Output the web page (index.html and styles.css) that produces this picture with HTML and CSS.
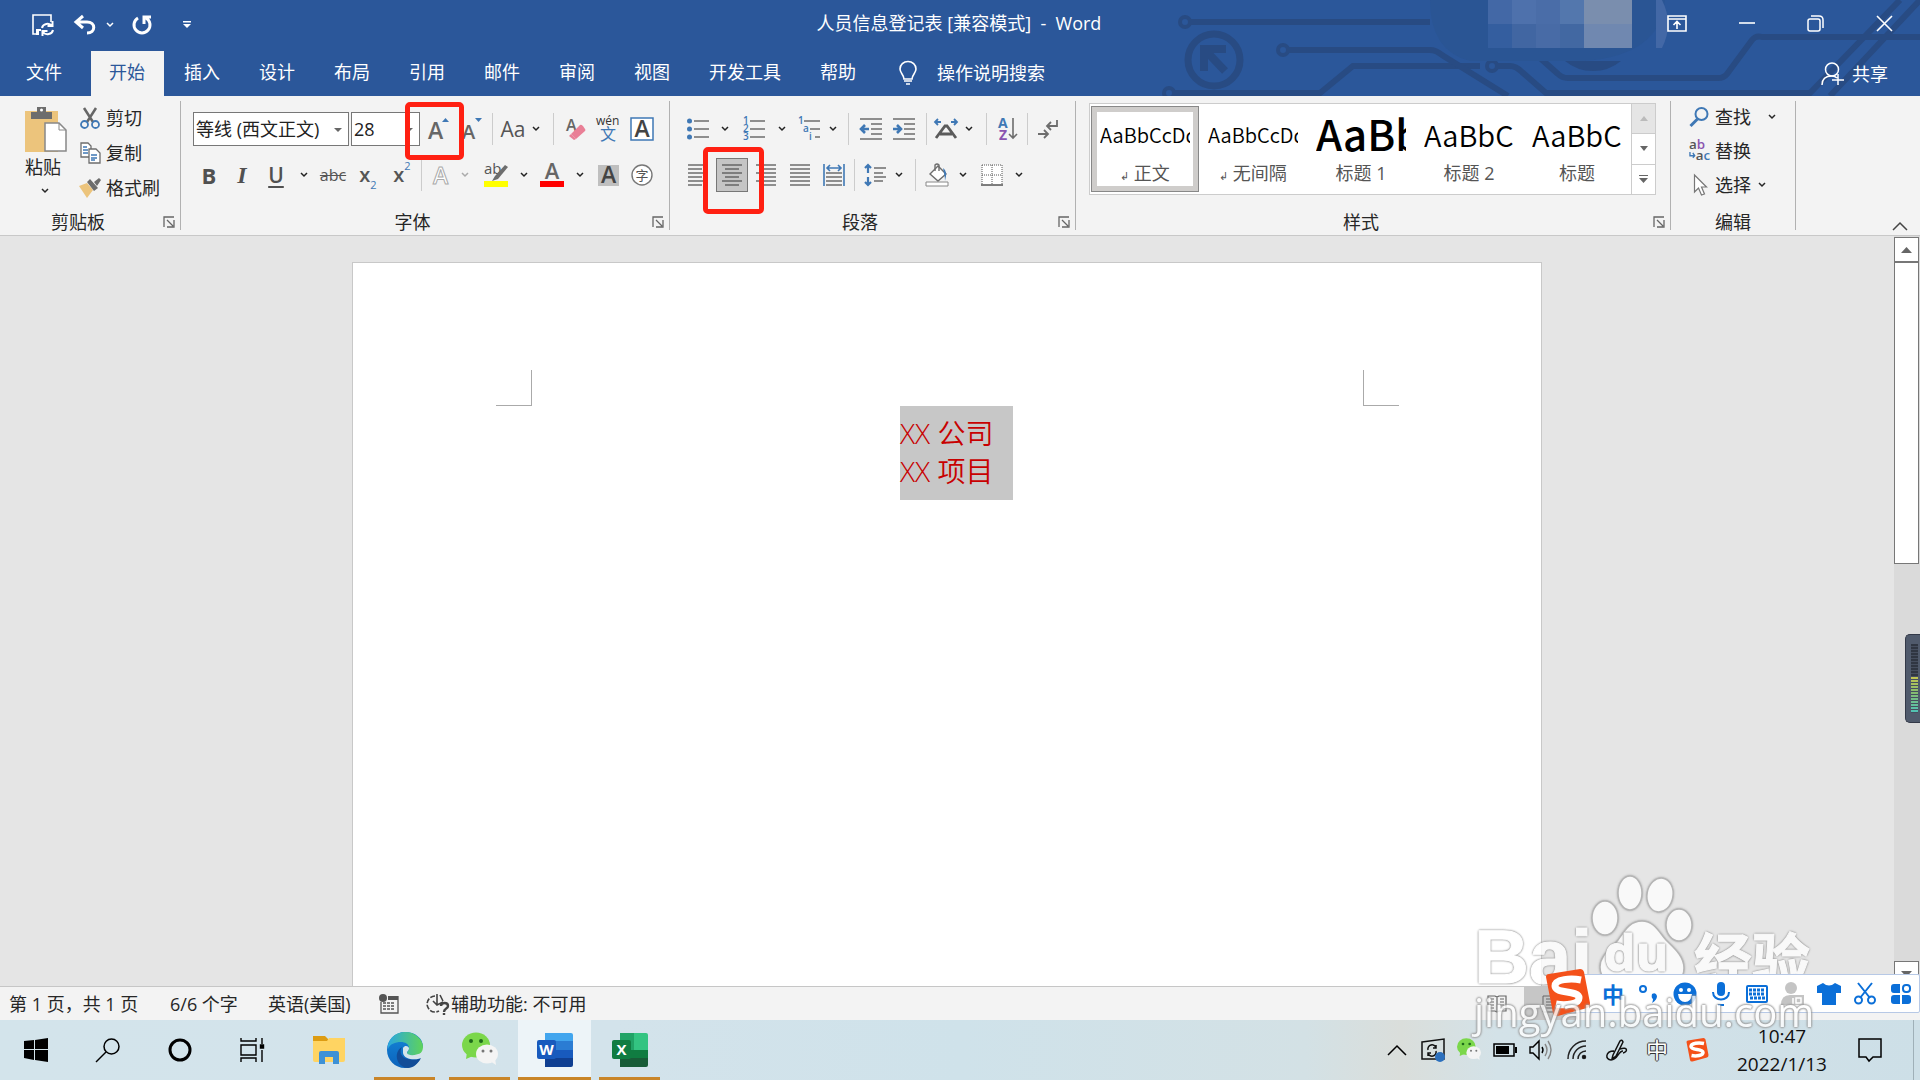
FILE: index.html
```html
<!DOCTYPE html>
<html lang="zh-CN">
<head>
<meta charset="utf-8">
<title>人员信息登记表 [兼容模式] - Word</title>
<link rel="stylesheet" href="styles.css">
</head>
<body>
<svg class="defs" aria-hidden="true">
  <symbol id="chev" viewBox="0 0 8 6"><path d="M1 1l3 3 3-3" fill="none" stroke="currentColor" stroke-width="1.5"/></symbol>
  <symbol id="launch" viewBox="0 0 12 12"><path d="M1 11V1h10M4 4l6 6M11 4v7H4" fill="none" stroke="#666" stroke-width="1.3"/></symbol>
  <symbol id="wechat" viewBox="0 0 36 36"><ellipse cx="14" cy="13" rx="14" ry="12.5" fill="#7bd74b"/><path d="M5 20l-1 7 7-3z" fill="#7bd74b"/><circle cx="9" cy="9" r="2" fill="#1f6b1b"/><circle cx="19" cy="9" r="2" fill="#1f6b1b"/><ellipse cx="25" cy="22" rx="11" ry="9.500" fill="#f4f4f4"/><path d="M28 29l6 4-1-7z" fill="#f4f4f4"/><circle cx="21" cy="19" r="1.500" fill="#777"/><circle cx="29" cy="19" r="1.500" fill="#777"/></symbol>
  <symbol id="sogou" viewBox="0 0 48 48"><path d="M3 8q0-3 3-3l31-5q3 0 4 3l6 31q0 4-3 5l-29 8q-4 1-5-3z" fill="#f4511a"/><path d="M38 11c-10-2-26-1-26 6 0 8 24 4 24 12 0 6-13 8-23 6" fill="none" stroke="#fff" stroke-width="7"/></symbol>
</svg>

<header class="top">
  <svg class="circuit" viewBox="0 0 760 96" aria-hidden="true">
    <g fill="none" stroke="#284b83" stroke-width="6">
      <circle cx="25" cy="22" r="5" stroke-width="4"/><path d="M31 22H270"/>
      <ellipse cx="54" cy="60" rx="26" ry="26" stroke-width="7"/>
      <path d="M44 71V49H66M46 51l19 20" stroke-width="8"/>
      <circle cx="9" cy="93" r="5" stroke-width="4"/><path d="M15 93H160l33-27H320"/>
      <circle cx="123" cy="50" r="5" stroke-width="4"/><path d="M129 50H270q6 0 12 5l66 41"/>
      <circle cx="332" cy="66" r="5" stroke-width="4"/><path d="M338 66h12q6 0 12 6l24 21H650L740 0M380 58l18 16q4 4 10 4H558q6 0 9-4l25-34q4-5 10-3H760M670 96L760 0"/>
    </g>
    <path d="M405 61q12 10 28 10t28-10z" fill="#284b83"/>
    <path d="M270 0H505q-4 55-80 61H310q-40-10-40-61z" fill="#2a5594"/>
    <g><path d="M328 0h24v24h-24z" fill="#4368a6"/><path d="M352 0h24v24h-24z" fill="#4e71ac"/><path d="M376 0h24v24h-24z" fill="#4a6da8"/><path d="M400 0h24v24h-24z" fill="#5377ad"/><path d="M424 0h48v24h-48z" fill="#7a8eae"/><path d="M328 24h24v24h-24z" fill="#345e9f"/><path d="M352 24h24v24h-24z" fill="#4166a2"/><path d="M376 24h24v24h-24z" fill="#486ba6"/><path d="M400 24h24v24h-24z" fill="#4268a2"/><path d="M424 24h48v24h-48z" fill="#7088b0"/><path d="M496 0h6q12 24 0 48h-6z" fill="#4368a6"/></g>
  </svg>
  <div class="titlebar">
    <div class="qat">
      <button aria-label="保存"><svg width="22" height="22" viewBox="0 0 22 22" fill="none" stroke="#fff" stroke-width="1.600"><path d="M6 20H1V1h18v7"/><path d="M4 15h5v2H7v4H4z" fill="#fff" stroke="none"/><path d="M10 14a5.500 5 0 0 1 10-2M20.500 7v5h-5M21 16a5.500 5 0 0 1-10 2M10.500 22v-5h5" stroke-width="2"/></svg></button>
      <button aria-label="撤消"><svg width="22" height="20" viewBox="0 0 22 20" fill="none" stroke="#fff" stroke-width="3"><path d="M9 1L2 7l7 6M2 7h11c9 0 9 11 0 11"/></svg></button>
      <button class="mini" aria-label="撤消选项"><svg width="8" height="6"><use href="#chev"/></svg></button>
      <button aria-label="恢复"><svg width="20" height="20" viewBox="0 0 20 20" fill="none" stroke="#fff" stroke-width="3"><path d="M6 3a8 8 0 1 0 8 0M12 9V2h7"/></svg></button>
      <button aria-label="自定义快速访问工具栏"><svg width="8" height="8" viewBox="0 0 8 8" fill="#fff"><path d="M0 0h8v1.500H0zM0 3h8L4 7z"/></svg></button>
    </div>
    <h1 class="doc-title">人员信息登记表 [兼容模式]&nbsp; -&nbsp; Word</h1>
    <div class="winbtns">
      <button aria-label="功能区显示选项"><svg width="20" height="17" viewBox="0 0 20 17" fill="none" stroke="#fff" stroke-width="1.600"><path d="M1 1h18v15H1zM1 4h18M10 14V7M6.500 10L10 6.500l3.500 3.500"/></svg></button>
      <button aria-label="最小化"><svg width="16" height="17" viewBox="0 0 16 17"><path d="M0 8h16" stroke="#fff" stroke-width="1.600"/></svg></button>
      <button aria-label="还原"><svg width="17" height="17" viewBox="0 0 17 17" fill="none" stroke="#fff" stroke-width="1.500"><rect x="1" y="4" width="12" height="12" rx="2"/><path d="M4 1h8q4 0 4 4v8"/></svg></button>
      <button aria-label="关闭"><svg width="17" height="17" viewBox="0 0 17 17"><path d="M1 1l15 15M16 1L1 16" stroke="#fff" stroke-width="1.600"/></svg></button>
    </div>
  </div>
  <nav class="tabs">
    <a href="#" class="tab file">文件</a><a href="#" class="tab active">开始</a><a href="#" class="tab">插入</a><a href="#" class="tab">设计</a><a href="#" class="tab">布局</a><a href="#" class="tab">引用</a><a href="#" class="tab">邮件</a><a href="#" class="tab">审阅</a><a href="#" class="tab">视图</a><a href="#" class="tab">开发工具</a><a href="#" class="tab">帮助</a>
    <button class="tellme"><svg width="18" height="24" viewBox="0 0 18 24" fill="none" stroke="#fff" stroke-width="1.600"><path d="M5 18c0-4-4-6-4-10a8 7.500 0 0 1 16 0c0 4-4 6-4 10zM5 20h8M7 23h4"/></svg>操作说明搜索</button>
    <button class="share"><svg width="24" height="24" viewBox="0 0 24 24" fill="none" stroke="#fff" stroke-width="1.500"><ellipse cx="11" cy="7.500" rx="6.500" ry="6.500"/><path d="M1 23c0-7 5-9 10-9 2 0 4 1 5 2M17 12v11M11 18h12"/></svg>共享</button>
  </nav>
</header>

<section class="ribbon" aria-label="开始">
  <div class="group clip">
    <div class="tools">
      <button class="paste"><svg width="42" height="46" viewBox="0 0 42 46"><path d="M0 5h33v41H0z" fill="#ecc47c"/><path d="M6 13V6h6V1h9v5h6v7z" fill="#6d6d6d"/><circle cx="16.500" cy="4" r="1.500" fill="#fff"/><path d="M20 17h14l7 7v21H20z" fill="#fff" stroke="#888" stroke-width="1.500"/><path d="M34 17v7h7" fill="none" stroke="#888"/></svg><span>粘贴</span><svg class="more" width="8" height="6"><use href="#chev"/></svg></button>
      <div class="stack wide">
        <button><svg width="20" height="22" viewBox="0 0 20 22" fill="none"><path d="M4 1l9 14M16 1L7 15" stroke="#666" stroke-width="2.500"/><ellipse cx="4.500" cy="17.500" rx="3.500" ry="3.500" stroke="#3f78b5" stroke-width="1.800"/><ellipse cx="15.500" cy="17.500" rx="3.500" ry="3.500" stroke="#3f78b5" stroke-width="1.800"/></svg>剪切</button>
        <button><svg width="20" height="22" viewBox="0 0 20 22" fill="#fff" stroke="#6d6d6d" stroke-width="1.300"><path d="M1 1h7l3 3v11H1z"/><path d="M9 7h7l4 4v10H9z"/><path d="M3 5h4M3 8h5M3 11h5M11 13h6M11 16h6M11 18h4" stroke="#3f78b5"/></svg>复制</button>
        <button><svg width="22" height="20" viewBox="0 0 22 20"><path d="M0 8l8-3 6 7-6 8z" fill="#ecc47c"/><path d="M8 4l3-3 8 9-4 3zM15 4l5-4 2 2-4 6z" fill="#6d6d6d"/></svg>格式刷</button>
      </div>
    </div>
    <div class="caption"><span>剪贴板</span><button aria-label="剪贴板设置"><svg width="12" height="12"><use href="#launch"/></svg></button></div>
  </div>

  <div class="group font">
    <div class="tools rows">
      <div class="row">
        <label class="combo name"><select aria-label="字体"><option>等线 (西文正文)</option></select></label>
        <label class="combo size"><select aria-label="字号"><option>28</option></select></label>
        <button class="t w34 marked" aria-label="增大字号"><svg width="20" height="24" viewBox="0 0 20 24"><text x="1" y="22" class="ga big">A</text><path d="M15 5l3.500-4L22 5z" fill="#3f78b5"/></svg><i class="mark grow"></i></button>
        <button class="t w32" aria-label="减小字号"><svg width="20" height="24" viewBox="0 0 20 24"><text x="2" y="22" class="ga mid">A</text><path d="M15 1l3.500 4L22 1z" fill="#3f78b5"/></svg></button>
        <i class="sep w12"></i>
        <button class="t w30 aa">Aa</button><button class="t w16" aria-label="更改大小写"><svg width="8" height="6"><use href="#chev"/></svg></button>
        <i class="sep w18"></i>
        <button class="t w28" aria-label="清除所有格式"><svg width="20" height="24" viewBox="0 0 20 24"><text x="0" y="14" class="ga small">A</text><path d="M5 17L14 8q1-1 3 1l2 3q1 1 0 2l-9 8z" fill="#e97f96"/><path d="M3 19l2-2 5 5-2 1z" fill="#e97f96"/></svg></button>
        <button class="t w36" aria-label="拼音指南"><svg width="24" height="26" viewBox="0 0 24 26"><text x="0" y="9" class="py">wén</text><text x="4" y="24" class="wen">文</text></svg></button>
        <button class="t w32" aria-label="字符边框"><svg width="24" height="24" viewBox="0 0 24 24"><path d="M1 1h22v22H1z" fill="#fff" stroke="#3f78b5" stroke-width="1.500"/><text x="12" y="20" class="ga big dark" text-anchor="middle">A</text></svg></button>
      </div>
      <div class="row second">
        <button class="t w32 b">B</button><button class="t w34 i">I</button><button class="t w34 u">U</button>
        <button class="t w22" aria-label="下划线样式"><svg width="8" height="6"><use href="#chev"/></svg></button>
        <button class="t w36 strike">abc</button><button class="t w34 xs">x<sub>2</sub></button><button class="t w34 xs">x<sup>2</sup></button>
        <i class="sep w4"></i>
        <button class="t w34" aria-label="文本效果"><svg width="18" height="22" viewBox="0 0 18 22"><text x="2" y="20" class="outlined">A</text></svg></button>
        <button class="t w16 dim" aria-label="文本效果选项"><svg width="8" height="6"><use href="#chev"/></svg></button>
        <button class="t w46" aria-label="突出显示"><svg width="24" height="24" viewBox="0 0 24 24"><text x="0" y="11" class="hl">ab</text><path d="M11 13L21 2l3 2-10 12-6 2z" fill="#6d6d6d"/><path d="M0 18h24v6H0z" fill="#ff0"/></svg></button>
        <button class="t w10" aria-label="突出显示颜色"><svg width="8" height="6"><use href="#chev"/></svg></button>
        <button class="t w46" aria-label="字体颜色"><svg width="24" height="24" viewBox="0 0 24 24"><text x="12" y="16" class="ga mid2" text-anchor="middle">A</text><path d="M0 18h24v6H0z" fill="#f00"/></svg></button>
        <button class="t w10" aria-label="字体颜色选项"><svg width="8" height="6"><use href="#chev"/></svg></button>
        <button class="t w46" aria-label="字符底纹"><svg width="21" height="21" viewBox="0 0 21 21"><path d="M0 0h21v21H0z" fill="#bfbfbf"/><text x="10.500" y="18" class="ga big dark" text-anchor="middle">A</text></svg></button>
        <button class="t w22" aria-label="带圈字符"><svg width="22" height="22" viewBox="0 0 22 22"><circle cx="11" cy="11" r="10" fill="#fff" stroke="#777" stroke-width="1.400"/><text x="11" y="16" class="zi" text-anchor="middle">字</text></svg></button>
      </div>
    </div>
    <div class="caption"><span>字体</span><button aria-label="字体设置"><svg width="12" height="12"><use href="#launch"/></svg></button></div>
  </div>

  <div class="group para">
    <div class="tools rows">
      <div class="row">
        <button class="t w36" aria-label="项目符号"><svg width="22" height="22" viewBox="0 0 22 22"><path d="M7 3h15M7 11h15M7 19h15" stroke="#6d6d6d" stroke-width="1.400"/><g fill="#3f78b5"><circle cx="2.500" cy="3" r="2.500"/><circle cx="2.500" cy="11" r="2.500"/><circle cx="2.500" cy="19" r="2.500"/></g></svg></button>
        <button class="t w18" aria-label="符号库"><svg width="8" height="6"><use href="#chev"/></svg></button>
        <button class="t w40" aria-label="编号"><svg width="22" height="24" viewBox="0 0 22 24"><path d="M7 4h15M7 12h15M7 20h15" stroke="#6d6d6d" stroke-width="1.400"/><g class="num"><text x="0" y="7">1</text><text x="0" y="15">2</text><text x="0" y="23">3</text></g></svg></button>
        <button class="t w16" aria-label="编号库"><svg width="8" height="6"><use href="#chev"/></svg></button>
        <button class="t w38" aria-label="多级列表"><svg width="22" height="24" viewBox="0 0 22 24"><path d="M6 4h16M12 12h10M17 20h5" stroke="#6d6d6d" stroke-width="1.400"/><g class="num"><text x="0" y="7">1</text><text x="5" y="15">a</text><text x="11" y="23">i</text></g></svg></button>
        <button class="t w10" aria-label="列表库"><svg width="8" height="6"><use href="#chev"/></svg></button>
        <i class="sep w20"></i>
        <button class="t w26" aria-label="减少缩进量"><svg width="22" height="22" viewBox="0 0 22 22"><path d="M0 1h22M11 6h11M11 11h11M11 16h11M0 21h22" stroke="#6d6d6d" stroke-width="1.400"/><path d="M9 11H2M5 7l-4 4 4 4" stroke="#3f78b5" stroke-width="2.600" fill="none"/></svg></button>
        <button class="t w40" aria-label="增加缩进量"><svg width="22" height="22" viewBox="0 0 22 22"><path d="M0 1h22M11 6h11M11 11h11M11 16h11M0 21h22" stroke="#6d6d6d" stroke-width="1.400"/><path d="M0 11h7M4 7l4 4-4 4" stroke="#3f78b5" stroke-width="2.600" fill="none"/></svg></button>
        <i class="sep w4"></i>
        <button class="t w36" aria-label="中文版式"><svg width="24" height="22" viewBox="0 0 24 22"><path d="M7 4H1M4 1L1 4l3 3M17 4h6M20 1l3 3-3 3" stroke="#3f78b5" stroke-width="1.800" fill="none"/><path d="M2 20L11 8h2l9 12M6 16h12" fill="none" stroke="#5b5b5b" stroke-width="2.800"/></svg></button>
        <button class="t w10" aria-label="中文版式选项"><svg width="8" height="6"><use href="#chev"/></svg></button>
        <i class="sep w24"></i>
        <button class="t w20" aria-label="排序"><svg width="20" height="24" viewBox="0 0 20 24"><text x="0" y="11" class="az">A</text><text x="1" y="23" class="az z">Z</text><path d="M15 1v20M11 17l4 4 4-4" fill="none" stroke="#6d6d6d" stroke-width="1.600"/></svg></button>
        <i class="sep w18"></i>
        <button class="t w24" aria-label="显示编辑标记"><svg width="20" height="20" viewBox="0 0 20 20" fill="none" stroke="#6d6d6d" stroke-width="1.800"><path d="M19 1v6H9M13 3L9 7l4 4M0 15h9M6 11l4 4-4 4"/></svg></button>
      </div>
      <div class="row second">
        <button class="t w36" aria-label="左对齐"><svg width="20" height="22" viewBox="0 0 20 22"><path d="M0 1h20M0 5h14M0 9h20M0 13h14M0 17h20M0 21h14" stroke="#6d6d6d" stroke-width="1.300"/></svg></button>
        <button class="t w32 pressed marked" aria-label="居中"><svg width="20" height="22" viewBox="0 0 20 22"><path d="M0 1h20M3 5h14M0 9h20M3 13h14M0 17h20M3 21h14" stroke="#666" stroke-width="1.300"/></svg><i class="mark center"></i></button>
        <button class="t w36" aria-label="右对齐"><svg width="20" height="22" viewBox="0 0 20 22"><path d="M0 1h20M6 5h14M0 9h20M6 13h14M0 17h20M6 21h14" stroke="#6d6d6d" stroke-width="1.300"/></svg></button>
        <button class="t w32" aria-label="两端对齐"><svg width="20" height="22" viewBox="0 0 20 22"><path d="M0 1h20M0 5h20M0 9h20M0 13h20M0 17h20M0 21h20" stroke="#6d6d6d" stroke-width="1.300"/></svg></button>
        <button class="t w36" aria-label="分散对齐"><svg width="22" height="22" viewBox="0 0 22 22"><path d="M1 0v22M21 0v22M4 4h14M7 1L4 4l3 3M15 1l3 3-3 3" stroke="#3f78b5" stroke-width="1.600" fill="none"/><path d="M3 9h16M3 13h16M3 17h16M3 21h16" stroke="#6d6d6d" stroke-width="1.300"/></svg></button>
        <i class="sep w4"></i>
        <button class="t w38" aria-label="行和段落间距"><svg width="22" height="22" viewBox="0 0 22 22"><path d="M4 1v8M1 4l3-3 3 3M4 13v8M1 18l3 3 3-3" stroke="#3f78b5" stroke-width="2.200" fill="none"/><path d="M10 4h12M10 9h9M10 13h12M10 17h9" stroke="#6d6d6d" stroke-width="1.300"/></svg></button>
        <button class="t w10" aria-label="间距选项"><svg width="8" height="6"><use href="#chev"/></svg></button>
        <i class="sep w22"></i>
        <button class="t w22" aria-label="底纹"><svg width="24" height="24" viewBox="0 0 24 24"><path d="M5 11l8-8 8 8-8 7z" fill="#fff" stroke="#6d6d6d" stroke-width="1.400"/><path d="M10 8V2q2-2 4 0v6" fill="none" stroke="#6d6d6d" stroke-width="1.400"/><path d="M18 5q5 3 2 13 0-4-1-8z" fill="#3f78b5"/><path d="M1 19h22v4H1z" fill="#fff" stroke="#888"/></svg></button>
        <button class="t w30" aria-label="底纹颜色"><svg width="8" height="6"><use href="#chev"/></svg></button>
        <button class="t w28" aria-label="边框"><svg width="22" height="22" viewBox="0 0 22 22"><path d="M1 1h20v20H1z" fill="#fff"/><path d="M1 1h20M1 1v20M21 1v20M1 11h20M11 1v20" stroke="#555" stroke-dasharray="1 1"/><path d="M0 21h22" stroke="#555" stroke-width="1.500"/></svg></button>
        <button class="t w26" aria-label="边框选项"><svg width="8" height="6"><use href="#chev"/></svg></button>
      </div>
    </div>
    <div class="caption"><span>段落</span><button aria-label="段落设置"><svg width="12" height="12"><use href="#launch"/></svg></button></div>
  </div>

  <div class="group styles">
    <div class="tools">
      <div class="gallery">
        <button class="style on"><span class="pv">AaBbCcDd</span><span class="nm"><small>↲</small> 正文</span></button>
        <button class="style"><span class="pv">AaBbCcDd</span><span class="nm"><small>↲</small> 无间隔</span></button>
        <button class="style"><span class="pv h1">AaBb</span><span class="nm">标题 1</span></button>
        <button class="style"><span class="pv h2">AaBbC</span><span class="nm">标题 2</span></button>
        <button class="style"><span class="pv h2">AaBbC</span><span class="nm">标题</span></button>
        <div class="pager">
          <button class="off" aria-label="上一行"><svg width="8" height="5"><path d="M0 5l4-5 4 5z" fill="#bbb"/></svg></button>
          <button aria-label="下一行"><svg width="8" height="5"><path d="M0 0l4 5 4-5z" fill="#666"/></svg></button>
          <button aria-label="其他"><svg width="9" height="8"><path d="M0 0h9v1H0zM0 3l4.500 5L9 3z" fill="#666"/></svg></button>
        </div>
      </div>
    </div>
    <div class="caption"><span>样式</span><button aria-label="样式设置"><svg width="12" height="12"><use href="#launch"/></svg></button></div>
  </div>

  <div class="group edit">
    <div class="tools">
      <div class="stack">
        <button><svg width="20" height="20" viewBox="0 0 20 20" fill="none" stroke="#3f78b5"><circle cx="12" cy="7" r="6" stroke-width="2"/><path d="M8 12l-7 7" stroke-width="3"/></svg>查找<svg class="dd far" width="8" height="6"><use href="#chev"/></svg></button>
        <button><svg width="22" height="22" viewBox="0 0 22 22"><text x="0" y="9" class="rep">a<tspan fill="#8a55b0">b</tspan></text><text x="7" y="20" class="rep">a<tspan fill="#3f78b5">c</tspan></text><path d="M1 12v4h5M4 13l2 3-2 2" fill="none" stroke="#3f78b5" stroke-width="1.400"/></svg>替换</button>
        <button><svg width="20" height="22" viewBox="0 0 20 22"><path d="M5 1v17l4-4 3 7 3-1-3-7h5z" fill="#fff" stroke="#777" stroke-width="1.200"/></svg>选择<svg class="dd" width="8" height="6"><use href="#chev"/></svg></button>
      </div>
    </div>
    <div class="caption"><span>编辑</span></div>
  </div>
  <button class="collapse" aria-label="折叠功能区"><svg width="16" height="10" viewBox="0 0 16 10"><path d="M1 9l7-7 7 7" fill="none" stroke="#444" stroke-width="1.500"/></svg></button>
</section>

<main class="workspace">
  <div class="canvas">
    <article class="page">
      <div class="margins"><i class="corner l"></i><i class="corner r"></i></div>
      <div class="text"><p>XX 公司</p><p>XX 项目</p></div>
    </article>
  </div>
  <div class="scroll">
    <button aria-label="向上滚动"><svg width="11" height="6"><path d="M0 6l5.500-6L11 6z" fill="#666"/></svg></button>
    <div class="thumb"></div>
    <button class="down" aria-label="向下滚动"><svg width="11" height="6"><path d="M0 0l5.500 6L11 0z" fill="#666"/></svg></button>
  </div>
  <div class="meter"><i></i></div>
</main>

<footer class="status">
  <span class="s1">第 1 页，共 1 页</span><span class="s2">6/6 个字</span><span class="s3">英语(美国)</span>
  <svg class="s4" width="20" height="20" viewBox="0 0 20 20"><circle cx="4" cy="4" r="4" fill="#555"/><path d="M9 2h10v4H9z" fill="#555"/><path d="M2 8v11h17V2" fill="none" stroke="#555" stroke-width="1.300"/><path d="M4 9h12M4 12h12M4 15h12" stroke="#555" stroke-width="1.300" stroke-dasharray="3 1"/></svg>
  <svg width="24" height="22" viewBox="0 0 24 22" fill="none" stroke="#444" stroke-width="1.600"><path d="M8 3a8 8 0 1 0 4 15" stroke-dasharray="5 1.500"/><path d="M10 1v10M6 8l4 4 6-3M16 8l-3-6"/><path d="M14 13c0-4 7-4 7 0 0 3-4 2-4 6M17 20v2" stroke-width="2.400"/></svg>
  <span>辅助功能: 不可用</span>
  <div class="views">
    <button aria-label="阅读视图"><svg width="20" height="18" viewBox="0 0 20 18" fill="none" stroke="#666" stroke-width="1.200"><path d="M1 1h7l2 1 2-1h7v15h-7l-2 1-2-1H1zM10 2v15M3 4h4M3 7h4M3 10h4M3 13h4M13 4h4M13 7h4M13 10h4M13 13h4"/></svg></button>
    <button class="cur" aria-label="页面视图"><svg width="18" height="18" viewBox="0 0 18 18" fill="none" stroke="#666"><path d="M1 1h16v16H1zM4 4h10M4 7h10M4 10h10M4 13h10"/></svg></button>
  </div>
</footer>

<div class="taskbar">
  <button class="app" aria-label="开始菜单"><svg width="24" height="24" viewBox="0 0 24 24"><path d="M0 3l10-1v9H0zM11 2l13-2v11H11zM0 12h10v10L0 20zM11 12h13v12l-13-2z"/></svg></button>
  <button class="app" aria-label="搜索"><svg width="24" height="24" viewBox="0 0 24 24" fill="none" stroke="#000" stroke-width="1.500"><circle cx="15.500" cy="8.500" r="7.500"/><path d="M10 14L0 24"/></svg></button>
  <button class="app" aria-label="Cortana"><svg width="24" height="24" viewBox="0 0 24 24"><circle cx="12" cy="12" r="10" fill="none" stroke="#000" stroke-width="3"/></svg></button>
  <button class="app" aria-label="任务视图"><svg width="24" height="24" viewBox="0 0 24 24" fill="none" stroke="#000" stroke-width="1.400"><path d="M1 7h15v10H1zM1 0v3h15V0M1 24v-4h15v4M22 0v6M22 12v12"/><path d="M20.500 7h3v3h-3z" fill="#000"/></svg></button>
  <button class="app wide" aria-label="文件资源管理器"><svg width="32" height="28" viewBox="0 0 32 28"><path d="M0 0h12l3 3v5H0z" fill="#dd9c12"/><path d="M0 5h14l2-3h16v22q0 2-2 2H2q-2 0-2-2z" fill="#ffd462"/><path d="M6 28V17q0-2 2-2h16q2 0 2 2v11h-6v-7h-8v7z" fill="#3d91d6"/></svg></button>
  <button class="app run" aria-label="Microsoft Edge"><svg width="36" height="36" viewBox="0 0 36 36"><defs><linearGradient id="eg" x1="0" x2="1"><stop stop-color="#2aa7df"/><stop offset="1" stop-color="#5fd35a"/></linearGradient><linearGradient id="eb" x1="0" y1="0" x2="0" y2="1"><stop stop-color="#1487d8"/><stop offset="1" stop-color="#0c62bb"/></linearGradient></defs><path d="M36 15C36 6 28 0 18 0 8 0 0 8 0 18s8 18 18 18c7 0 13-4 16-11l-6-1z" fill="url(#eb)"/><path d="M1 13C3 5 10 0 18 0c11 0 18 8 18 15 0 6-5 9-10 9-4 0-6-1-6-3 0-1 2-2 2-5 0-4-4-6-8-6-6 0-11 2-13 7z" fill="url(#eg)"/><path d="M34 26c-4 2-8 2-13 1-7-1-9-7-6-12-9 5-6 20 6 21 5 0 10-4 13-10z" fill="#124d98"/><path d="M16 16c2-3 5-2 6 0 0 3-2 3-2 5 1 3 9 3 16-1v5c-6 4-19 3-20-4z" fill="#d4e4eb"/></svg></button>
  <button class="app run" aria-label="微信"><svg width="36" height="36"><use href="#wechat"/></svg></button>
  <button class="app run cur" aria-label="Word"><svg width="36" height="34" viewBox="0 0 36 34"><path d="M8 0h26q2 0 2 2v6H8z" fill="#41a5ee"/><path d="M8 8h28v9H8z" fill="#2b7cd3"/><path d="M8 17h28v8H8z" fill="#185abd"/><path d="M8 25h28v7q0 2-2 2H8z" fill="#103f91"/><rect y="7" width="19" height="19" rx="2" fill="#185abd"/><text x="9.500" y="22" class="logo" text-anchor="middle">W</text></svg></button>
  <button class="app run" aria-label="Excel"><svg width="36" height="34" viewBox="0 0 36 34"><path d="M8 0h26q2 0 2 2v15H8z" fill="#33c481"/><path d="M8 0h14v17H8z" fill="#21a366"/><path d="M8 17h28v8H8z" fill="#107c41"/><path d="M8 25h28v7q0 2-2 2H8z" fill="#185c37"/><rect y="7" width="19" height="19" rx="2" fill="#107c41"/><text x="9.500" y="22" class="logo" text-anchor="middle">X</text></svg></button>
  <div class="tray">
    <button aria-label="显示隐藏的图标"><svg width="20" height="12" viewBox="0 0 20 12"><path d="M1 11l9-9 9 9" fill="none" stroke="#000" stroke-width="1.500"/></svg></button>
    <button aria-label="更新"><svg width="24" height="24" viewBox="0 0 24 24" fill="none" stroke="#111" stroke-width="1.500"><path d="M1 4l22-3v20L1 21z"/><path d="M7 12a4 4 0 0 1 8-2M15 7v3h-3M15 13a4 4 0 0 1-8 2M7 18v-3h3"/><circle cx="19" cy="19" r="5" fill="#2c70bd" stroke="none"/></svg></button>
    <button aria-label="微信消息"><svg width="24" height="24"><use href="#wechat"/></svg></button>
    <button aria-label="电池"><svg width="24" height="14" viewBox="0 0 24 14"><path d="M1 1h20v12H1z" fill="none" stroke="#000" stroke-width="1.500"/><path d="M3 3h13v8H3zM22 4h2v6h-2z"/></svg></button>
    <button aria-label="音量"><svg width="24" height="20" viewBox="0 0 24 20" fill="none" stroke="#000" stroke-width="1.400"><path d="M1 7v6h3l6 6V1L4 7zM13 7q2 3 0 6"/><path d="M16 4q4 6 0 12M19 1q6 9 0 18" stroke="#888"/></svg></button>
    <button aria-label="网络"><svg width="20" height="20" viewBox="0 0 20 20" fill="none" stroke="#222" stroke-width="1.500"><path d="M1 19A18 18 0 0 1 19 1M6 19A13 13 0 0 1 19 6M11 19a8 8 0 0 1 8-8"/><circle cx="17" cy="17" r="1.500" fill="#000"/></svg></button>
    <button class="spaced" aria-label="Windows Ink"><svg width="22" height="22" viewBox="0 0 22 22" fill="none" stroke="#111" stroke-width="1.500"><path d="M7 16L14 2q2-2 3 1l-7 14-4 3zM8 12c-9 0-9 9-3 9 7 0 7-9 12-9M14 10c8-3 8 3 3 4"/></svg></button>
    <span class="ime spaced">中</span>
    <button class="spaced" aria-label="搜狗输入法"><svg width="24" height="24" viewBox="0 0 48 48"><use href="#sogou"/></svg></button>
    <div class="clock"><span>10:47</span><span>2022/1/13</span></div>
    <button aria-label="通知"><svg width="24" height="25" viewBox="0 0 24 25"><path d="M1 1h22v18h-8l-4 4-3-4H1z" fill="none" stroke="#000" stroke-width="1.500"/></svg></button>
    <i class="peek"></i>
  </div>
</div>

<div class="watermark" aria-hidden="true">
  <div class="wm-top"><span class="bai">Bai</span>
    <span class="paw"><svg width="104" height="112" viewBox="0 0 104 112"><g fill="#fff" stroke="#aaa" stroke-width="1.500"><ellipse cx="15" cy="43" rx="13" ry="17"/><ellipse cx="40" cy="18" rx="12" ry="17"/><ellipse cx="70" cy="20" rx="13" ry="17" transform="rotate(10 70 20)"/><ellipse cx="89" cy="50" rx="13" ry="16"/><path d="M52 46c12 0 17 11 24 19 8 8 18 16 18 28 0 13-10 17-20 15-14-3-29-3-43 0-11 2-21-4-21-16 0-12 11-18 18-27 7-10 12-19 24-19z"/></g></svg><b>du</b></span>
    <span class="jy">经验</span></div>
  <div class="wm-url">jingyan.baidu.com</div>
</div>

<div class="imebar">
  <svg class="logo-s" width="48" height="48"><use href="#sogou"/></svg>
  <button class="zh">中</button>
  <button aria-label="标点"><svg width="20" height="20" viewBox="0 0 20 20"><circle cx="4" cy="5" r="3" fill="none" stroke="#0b6fd8" stroke-width="2"/><path d="M13 10q4-2 5 2 0 4-5 7 1-2 1-4-2-1-1-5z" fill="#0b6fd8"/></svg></button>
  <button aria-label="表情"><svg width="24" height="24" viewBox="0 0 24 24"><circle cx="12" cy="12" r="11.500" fill="#0b6fd8"/><circle cx="8" cy="8" r="2" fill="#fff"/><circle cx="16" cy="8" r="2" fill="#fff"/><path d="M5 12h14q-1 8-7 8t-7-8z" fill="#fff"/></svg></button>
  <button aria-label="语音"><svg width="20" height="24" viewBox="0 0 20 24"><rect x="6" width="8" height="14" rx="4" fill="#0b6fd8"/><path d="M2 10c0 10 16 10 16 0M7 23h6" fill="none" stroke="#0b6fd8" stroke-width="2"/></svg></button>
  <button aria-label="键盘"><svg width="22" height="18" viewBox="0 0 22 18"><rect x="1" y="1" width="20" height="16" rx="1" fill="#fff" stroke="#0b6fd8" stroke-width="2"/><path d="M3 5h16M3 9h16M4 13h3M8 13h7M16 13h3" stroke="#0b6fd8" stroke-width="3" stroke-dasharray="3 1"/></svg></button>
  <button aria-label="账户"><svg width="24" height="24" viewBox="0 0 24 24" fill="#c4c4c4"><circle cx="10" cy="6" r="6"/><path d="M0 23q0-10 9-10h14v10z"/><path d="M12 16v6M15 16h5v5h-5z" fill="none" stroke="#fff" stroke-width="1.500"/></svg></button>
  <button aria-label="皮肤"><svg width="24" height="22" viewBox="0 0 24 22"><path d="M6 0q6 5 12 0l6 3v7h-5v12H5V10H0V3z" fill="#0b6fd8"/></svg></button>
  <button aria-label="截图"><svg width="22" height="22" viewBox="0 0 22 22" fill="none" stroke="#0b6fd8" stroke-width="2"><path d="M4 0l12 15M18 0L6 15"/><circle cx="4.500" cy="17" r="3.500"/><circle cx="17.500" cy="17" r="3.500"/></svg></button>
  <button aria-label="工具箱"><svg width="20" height="22" viewBox="0 0 20 22" fill="#0b6fd8"><path d="M0 4q0-3 3-3h6v9H3q-3 0-3-3zM0 15q0-3 3-3h6v9H3q-3 0-3-3zM11 12h6q3 0 3 3v3q0 3-3 3h-6z"/><rect x="12" y="2" width="7" height="7" rx="3" fill="none" stroke="#0b6fd8" stroke-width="2"/></svg></button>
</div>
</body>
</html>
```

FILE: styles.css
```css
* { box-sizing: border-box; }
body {
  margin: 0;
  height: 100vh;
  display: flex;
  flex-direction: column;
  overflow: hidden;
  position: relative;
  font-family: "Open Sans", "Noto Sans CJK SC", sans-serif;
  font-size: 18px;
  line-height: 24px;
  color: #262626;
  background: #e5e5e5;
}
button {
  margin: 0;
  padding: 0;
  border: 0;
  background: none;
  font: inherit;
  color: inherit;
  display: flex;
  align-items: center;
  justify-content: center;
  white-space: nowrap;
}
svg { flex: none; display: block; overflow: visible; }
.defs { position: absolute; width: 0; height: 0; overflow: hidden; }

/* title bar and tabs */
.top { position: relative; background: #2b579a; color: #fff; flex: none; overflow: hidden; }
.circuit { position: absolute; top: 0; right: 0; width: 760px; height: 96px; }
.titlebar { position: relative; height: 51px; display: grid; grid-template-columns: 1fr auto 1fr; align-items: center; padding-bottom: 5px; }
.qat { display: flex; align-items: center; gap: 20px; padding: 4px 0 0 32px; }
.qat .mini { margin: 0 -2px 0 -10px; }
.qat button:last-child { margin-left: 11px; }
.doc-title { margin: 0 2px 0 0; font-size: 18px; font-weight: 400; }
.winbtns { display: flex; justify-content: flex-end; gap: 52px; padding-right: 27px; }
.tabs { position: relative; display: flex; height: 45px; }
.tab { padding: 0 19px 0 20px; line-height: 43px; color: #fff; text-decoration: none; white-space: nowrap; }
.tab.file { padding: 0 29px 0 26px; }
.tab.active { background: #f3f3f3; color: #2b579a; padding: 0 19px 0 18px; }
.tellme { margin-left: 24px; gap: 20px; height: 43px; }
.share { margin-left: auto; margin-right: 32px; gap: 7px; }

/* ribbon */
.ribbon { display: flex; flex: none; height: 140px; padding-top: 5px; background: #f3f3f3; border-bottom: 1px solid #c8c8c8; }
.group { display: flex; flex-direction: column; height: 129px; border-right: 1px solid #b1b1b1; }
.tools { flex: 1; display: flex; min-height: 0; }
.caption { display: flex; flex: none; align-items: center; height: 16px; padding-right: 5px; white-space: nowrap; }
.caption span { flex: 1; text-align: center; }
.clip { width: 181px; padding-left: 25px; }
.clip .caption { padding-right: 5px; margin-left: -25px; }
.clip .caption span { padding-right: 7px; }
.font { width: 489px; padding-left: 12px; }
.font .caption span { padding-right: 20px; }
.para { width: 406px; padding-left: 10px; }
.para .caption span { padding-right: 18px; }
.styles { width: 595px; padding-left: 13px; }
.styles .caption span { padding-right: 20px; }
.edit { width: 125px; padding-left: 18px; }
.edit .caption { padding: 0 0 0 26px; }
.edit .caption span { text-align: left; }
.paste { flex-direction: column; align-items: flex-start; justify-content: flex-start; width: 42px; padding-top: 5px; margin-right: 12px; gap: 3px; align-self: flex-start; }
.paste .more { margin: 6px 0 0 16px; }
.stack { display: flex; flex-direction: column; margin-top: -1px; }
.stack button { flex: none; height: 34px; justify-content: flex-start; gap: 5px; }
.stack button > svg:first-child { width: 21px; }
.stack.wide button { height: 35px; }
.stack.wide button > svg:first-child { width: 22px; }
.dd { margin-left: 2px; }
.dd.far { margin-left: 12px; }
.rows { flex-direction: column; }
.row { display: flex; align-items: center; height: 34px; margin-top: 11px; }
.row.second { margin-top: 12px; }
.combo { position: relative; display: block; height: 34px; margin-right: 2px; }
.combo.name { width: 156px; }
.combo.size { width: 69px; margin-right: 0; }
.combo select { appearance: none; width: 100%; height: 34px; margin: 0; padding: 0 2px; border: 1px solid #777; border-radius: 0; background: #fff; font: inherit; color: #222; }
.combo::after { content: ""; position: absolute; right: 7px; top: 16px; border: 4px solid transparent; border-top-color: #666; border-bottom: 0; }
.t { height: 34px; flex: none; color: #222; }
.sep { flex: none; height: 32px; display: flex; justify-content: center; }
.sep::before { content: ""; width: 1px; background: #ccc; }
.w4 { width: 4px; } .w10 { width: 10px; } .w12 { width: 12px; } .w16 { width: 16px; } .w18 { width: 18px; }
.w20 { width: 20px; } .w22 { width: 22px; } .w24 { width: 24px; } .w26 { width: 26px; } .w28 { width: 28px; }
.w30 { width: 30px; } .w32 { width: 32px; } .w34 { width: 34px; } .w36 { width: 36px; } .w38 { width: 38px; }
.w40 { width: 40px; } .w46 { width: 46px; }
.dim { color: #aaa; }
.ga { font-weight: 600; fill: #666; }
.big { font-size: 23px; }
.mid { font-size: 20px; }
.mid2 { font-size: 22px; }
.small { font-size: 16px; }
.dark { fill: #444; }
.py { font-size: 12px; fill: #333; }
.wen { font-size: 16px; fill: #3f78b5; }
.zi { font-size: 13px; fill: #555; }
.hl { font-size: 15px; fill: #555; }
.aa { font-size: 21px; color: #555; }
.b { font-weight: 700; font-size: 22px; color: #505050; }
.i { font: italic 700 24px "Liberation Serif", serif; color: #505050; }
.u { font-weight: 600; font-size: 21px; color: #505050; text-decoration: underline; text-underline-offset: 3px; text-decoration-thickness: 2px; }
.strike { font-size: 16px; color: #555; text-decoration: line-through; }
.xs { font-weight: 600; font-size: 20px; color: #555; }
.xs sub, .xs sup { font-size: 11px; font-weight: 400; color: #3f78b5; line-height: 11px; }
.xs sub { align-self: flex-end; padding-bottom: 2px; }
.xs sup { align-self: flex-start; padding-top: 2px; }
.outlined { font-size: 23px; font-weight: 600; fill: #fff; stroke: #aaa; stroke-width: 1px; }
.num { font-size: 10px; fill: #3f78b5; font-weight: 600; }
.az { font-size: 14px; font-weight: 700; fill: #3f78b5; }
.az.z { fill: #8a55b0; }
.rep { font-size: 14px; font-weight: 600; fill: #555; }
.pressed { background: #c5c5c5; border: 1px solid #777; }
.marked { position: relative; }
.mark { position: absolute; z-index: 2; border: 5px solid #ff2012; border-radius: 5px; }
.mark.grow { left: -15px; top: -10px; width: 59px; height: 58px; }
.mark.center { left: -14px; top: -12px; width: 61px; height: 67px; }

.gallery { display: flex; align-self: flex-start; width: 567px; height: 92px; margin-top: 2px; padding: 1px 0 1px 1px; background: #fff; border: 1px solid #ccc; }
.style { width: 108px; height: 86px; padding: 8px 9px 0; flex-direction: column; align-items: stretch; justify-content: flex-start; color: #000; }
.style.on { margin-top: 1px; height: 86px; padding: 6px 8px 0; border: 1px solid #888; box-shadow: inset 0 0 0 5px #cfcdcb; }
.pv { font-family: "Noto Sans CJK SC", sans-serif; font-size: 20px; font-weight: 350; line-height: 44px; height: 46px; overflow: hidden; text-align: left; }
.pv.h1 { font-size: 42px; font-weight: 500; line-height: 40px; }
.pv.h2 { font-size: 29px; line-height: 42px; }
.nm { color: #555; text-align: center; line-height: 28px; }
.nm small { font-size: 11px; line-height: 11px; }
.pager { display: flex; flex-direction: column; width: 24px; margin: -1px 0 -1px auto; border-left: 1px solid #ccc; }
.pager button { flex: 1; border-bottom: 1px solid #ccc; }
.pager button:last-child { border-bottom: 0; }
.pager .off { background: #e5e5e5; }
.collapse { margin: auto 12px 4px auto; }

/* document */
.workspace { flex: 1; min-height: 0; display: flex; position: relative; border-bottom: 1px solid #c6c6c6; }
.canvas { flex: 1; display: flex; justify-content: center; padding: 26px 0 0; overflow: hidden; }
.page { width: 1190px; background: #fff; border: 1px solid #c8c8c8; border-bottom: 0; padding-top: 107px; }
.margins { display: flex; justify-content: space-between; padding: 0 142px 0 143px; }
.corner { width: 36px; height: 36px; border: 0 solid #aaa; border-bottom-width: 1px; }
.corner.l { border-right-width: 1px; }
.corner.r { border-left-width: 1px; }
.text { width: 113px; height: 94px; margin-left: 547px; padding-top: 8px; background: #c7c7c7; color: #c80000; font-size: 28px; font-weight: 350; line-height: 38px; }
.text p { margin: 0; white-space: nowrap; }
.scroll { width: 26px; padding: 1px 1px 0 0; display: flex; flex-direction: column; background: #dadada; }
.scroll button { height: 25px; flex: none; background: #fff; border: 1px solid #777; }
.scroll .thumb { height: 302px; background: #fff; border: 1px solid #777; }
.scroll .down { margin-top: auto; }
.meter { position: absolute; right: 0; top: 398px; width: 15px; height: 89px; border: 1px solid #333948; border-right: 0; border-radius: 5px 0 0 5px; background: #505a6c; padding: 9px 2px 9px 5px; }
.meter i { display: block; height: 69px; background: repeating-linear-gradient(transparent 0 2px, #464e5e 2px 3px), linear-gradient(#303642 0 48%, #c3c650 48%, #86bc70 70%, #4ec2b8); }

/* status bar */
.status { flex: none; height: 33px; display: flex; align-items: center; background: #f3f3f3; padding-left: 9px; white-space: nowrap; }
.s1 { width: 161px; }
.s2 { width: 98px; }
.s3 { width: 111px; }
.s4 { margin-right: 28px; }
.views { display: flex; height: 33px; margin-left: auto; margin-right: 342px; }
.views button { width: 54px; }
.views .cur { background: #c6c6c6; }

/* task bar */
.taskbar { flex: none; height: 60px; display: flex; background: linear-gradient(90deg, #d3e4eb 0, #d3e3eb 32%, #cfe2ea 50%, #d3e1e5 68%, #dadedb 73%, #d3e2e8 78%, #cddfe7 100%); }
.app { width: 72px; height: 60px; }
.app.wide { width: 79px; padding-left: 3px; }
.app.run { position: relative; width: 75px; }
.app.run::after { content: ""; position: absolute; left: 7px; right: 7px; bottom: 0; height: 3px; background: #c98528; }
.app.run.cur { width: 73px; background: #edf4f8; margin: 0 1px; }
.app.run.cur::after { left: 0; right: 0; }
.logo { font-size: 15px; font-weight: 700; fill: #fff; }
.tray { margin-left: auto; display: flex; align-items: center; gap: 12px; padding-right: 6px; color: #111; }
.tray button, .ime { width: 24px; height: 50px; }
.tray .spaced { margin-left: 4px; }
.ime { line-height: 48px; font-size: 22px; text-align: center; color: #fff; text-shadow: 1px 0 #333, -1px 0 #333, 0 1px #333, 0 -1px #333; }
.clock { display: flex; flex-direction: column; width: 104px; margin: 0 12px 0 9px; text-align: center; font-size: 19px; line-height: 28px; }
.peek { width: 1px; height: 60px; margin-left: 19px; background: #9fb0b8; }

/* overlays */
.watermark { position: absolute; right: 104px; bottom: 43px; width: 342px; color: #fff; white-space: nowrap; text-shadow: 1px 0 2px #999, -1px 0 2px #999, 0 1px 2px #999, 0 -1px 2px #999; }
.wm-top { display: flex; align-items: flex-end; height: 112px; line-height: 60px; opacity: .8; -webkit-text-stroke: 1px #fff; }
.bai { width: 116px; font: 700 76px/60px "Liberation Sans", sans-serif; }
.paw { position: relative; width: 104px; height: 112px; }
.paw svg { filter: drop-shadow(0 0 1px #999); }
.paw b { position: absolute; left: 14px; bottom: 10px; font: 700 50px/50px "Open Sans", sans-serif; }
.jy { font-size: 58px; line-height: 54px; font-weight: 700; }
.wm-url { position: relative; z-index: 3; font-size: 40px; line-height: 50px; opacity: .8; }
.imebar { position: absolute; z-index: 2; right: 0; bottom: 67px; height: 39px; display: flex; align-items: center; background: #fff; border: 1px solid #b7c9e6; border-radius: 2px; padding-left: 32px; }
.imebar button { width: 36px; height: 36px; }
.imebar .zh { color: #0b6fd8; font-size: 22px; font-weight: 700; }
.logo-s { position: absolute; left: -20px; top: -6px; }
```
